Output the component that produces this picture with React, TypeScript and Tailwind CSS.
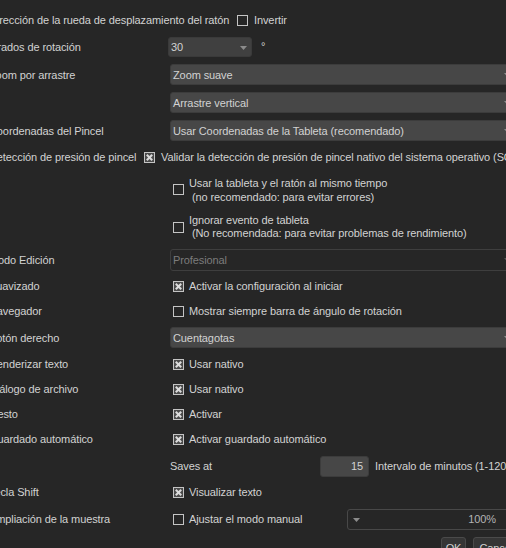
import React from "react";

const Check = ({ checked = false }: { checked?: boolean }) => (
  <svg width="11" height="11" viewBox="0 0 11 11" className="shrink-0 block">
    <rect x="0.5" y="0.5" width="10" height="10" fill={checked ? "#4a4a4a" : "none"} stroke="#c4c4c4" />
    {checked && (
      <g stroke="#dcdcdc" strokeWidth="2" strokeLinecap="square">
        <line x1="3.5" y1="3.5" x2="7.5" y2="7.5" />
        <line x1="7.5" y1="3.5" x2="3.5" y2="7.5" />
      </g>
    )}
  </svg>
);

const Arrow = ({ color = "#8c8c8c" }: { color?: string }) => (
  <svg width="7" height="4" viewBox="0 0 7 4" className="block">
    <polygon points="0,0 7,0 3.5,4" fill={color} />
  </svg>
);

const Label = ({ children, w = "w-[181px]" }: { children?: React.ReactNode; w?: string }) => (
  <div className={`${w} shrink-0 ml-[-11px] whitespace-nowrap`}>{children}</div>
);

const Combo = ({ text }: { text: string }) => (
  <div className="relative flex items-center w-[346px] h-[21px] shrink-0 bg-[#474747] border border-[#3c3c3c] rounded-[3px] pl-[2px] whitespace-nowrap">
    {text}
    <div className="absolute right-[4px] top-[8px]">
      <Arrow />
    </div>
  </div>
);

const CheckRow = ({ checked, text }: { checked?: boolean; text: string }) => (
  <div className="flex items-center ml-[3px] whitespace-nowrap">
    <Check checked={checked} />
    <span className="ml-[5px]">{text}</span>
  </div>
);

export default function App() {
  return (
    <div className="w-[506px] h-[548px] overflow-hidden bg-[#262626] text-[#d2d2d2] font-['Liberation_Sans',sans-serif] text-[11px] leading-[14px] tracking-[-0.1px] flex flex-col pt-[7px] [&>*]:shrink-0">
      {/* mouse wheel direction */}
      <div className="flex items-center h-[26px]">
        <Label w="w-[248px]">Dirección de la rueda de desplazamiento del ratón</Label>
        <Check />
        <span className="ml-[6px]">Invertir</span>
      </div>

      {/* rotation step */}
      <div className="flex items-center h-[28px]">
        <Label>Grados de rotación</Label>
        <div className="relative flex items-center ml-[-2px] w-[84px] h-[20px] bg-[#404040] border border-[#3a3a3a] rounded-[3px] pl-[2px]">
          30
          <div className="absolute right-[4px] top-[8px]">
            <Arrow />
          </div>
        </div>
        <span className="ml-[9px] mt-[-3px]">°</span>
      </div>

      {/* drag zoom */}
      <div className="flex items-center h-[27px]">
        <Label>Zoom por arrastre</Label>
        <Combo text="Zoom suave" />
      </div>
      <div className="flex items-center h-[29px]">
        <Label />
        <Combo text="Arrastre vertical" />
      </div>

      {/* pen coordinates */}
      <div className="flex items-center h-[27px]">
        <Label>Coordenadas del Pincel</Label>
        <Combo text="Usar Coordenadas de la Tableta (recomendado)" />
      </div>

      {/* pressure detection */}
      <div className="flex items-center h-[26px] whitespace-nowrap">
        <Label w="w-[155px]">Detección de presión de pincel</Label>
        <Check checked />
        <span className="ml-[6px]">Validar la detección de presión de pincel nativo del sistema operativo (SO)</span>
      </div>

      <div className="flex items-center h-[39px]">
        <Label />
        <div className="flex items-center ml-[3px] whitespace-pre">
          <Check />
          <div className="ml-[5px] leading-[14px] mt-[1px]">
            <div>Usar la tableta y el ratón al mismo tiempo</div>
            <div> (no recomendado: para evitar errores)</div>
          </div>
        </div>
      </div>

      <div className="flex items-center h-[36px]">
        <Label />
        <div className="flex items-center ml-[3px] whitespace-pre">
          <Check />
          <div className="ml-[5px] leading-[13px]">
            <div>Ignorar evento de tableta</div>
            <div> (No recomendada: para evitar problemas de rendimiento)</div>
          </div>
        </div>
      </div>

      {/* edit mode (disabled) */}
      <div className="flex items-center h-[30px]">
        <Label>Modo Edición</Label>
        <div className="relative flex items-center w-[346px] h-[22px] shrink-0 border border-[#3e3e3e] rounded-[3px] pl-[2px] text-[#7c7c7c]">
          Profesional
          <div className="absolute right-[4px] top-[8px]">
            <Arrow color="#555555" />
          </div>
        </div>
      </div>

      <div className="flex items-center h-[22px]">
        <Label>Suavizado</Label>
        <CheckRow checked text="Activar la configuración al iniciar" />
      </div>

      <div className="flex items-center h-[28px]">
        <Label>Navegador</Label>
        <CheckRow text="Mostrar siempre barra de ángulo de rotación" />
      </div>

      <div className="flex items-center h-[25px]">
        <Label>Botón derecho</Label>
        <Combo text="Cuentagotas" />
      </div>

      <div className="flex items-center h-[28px]">
        <Label>Renderizar texto</Label>
        <CheckRow checked text="Usar nativo" />
      </div>

      <div className="flex items-center h-[22px]">
        <Label>Diálogo de archivo</Label>
        <CheckRow checked text="Usar nativo" />
      </div>

      <div className="flex items-center h-[28px]">
        <Label>Gesto</Label>
        <CheckRow checked text="Activar" />
      </div>

      <div className="flex items-center h-[22px]">
        <Label>Guardado automático</Label>
        <CheckRow checked text="Activar guardado automático" />
      </div>

      {/* autosave interval */}
      <div className="flex items-center h-[32px] whitespace-nowrap">
        <Label />
        <span className="w-[150px] shrink-0">Saves at</span>
        <div className="flex items-center justify-end w-[49px] h-[21px] shrink-0 bg-[#474747] border border-[#3c3c3c] rounded-[3px] pr-[5px]">
          15
        </div>
        <span className="ml-[6px]">Intervalo de minutos (1-120)</span>
      </div>

      <div className="flex items-center h-[20px]">
        <Label>Tecla Shift</Label>
        <CheckRow checked text="Visualizar texto" />
      </div>

      {/* sample zoom */}
      <div className="flex items-center h-[34px]">
        <Label>Ampliación de la muestra</Label>
        <div className="w-[177px] shrink-0">
          <CheckRow text="Ajustar el modo manual" />
        </div>
        <div className="relative flex items-center justify-end w-[170px] h-[21px] shrink-0 border border-[#484848] rounded-[3px] pr-[20px] text-[#b4b4b4]">
          100%
          <div className="absolute left-[5px] top-[8px]">
            <Arrow />
          </div>
        </div>
      </div>

      {/* dialog buttons */}
      <div className="flex items-start gap-[7px] ml-[441px] mt-[1px]">
        <div className="flex items-center justify-center w-[25px] h-[22px] shrink-0 bg-[#353535] border border-[#4a4a4a] rounded-[3px]">
          OK
        </div>
        <div className="flex items-center justify-center w-[56px] h-[22px] shrink-0 bg-[#353535] border border-[#4a4a4a] rounded-[3px] whitespace-nowrap">
          Cancelar
        </div>
      </div>
    </div>
  );
}
